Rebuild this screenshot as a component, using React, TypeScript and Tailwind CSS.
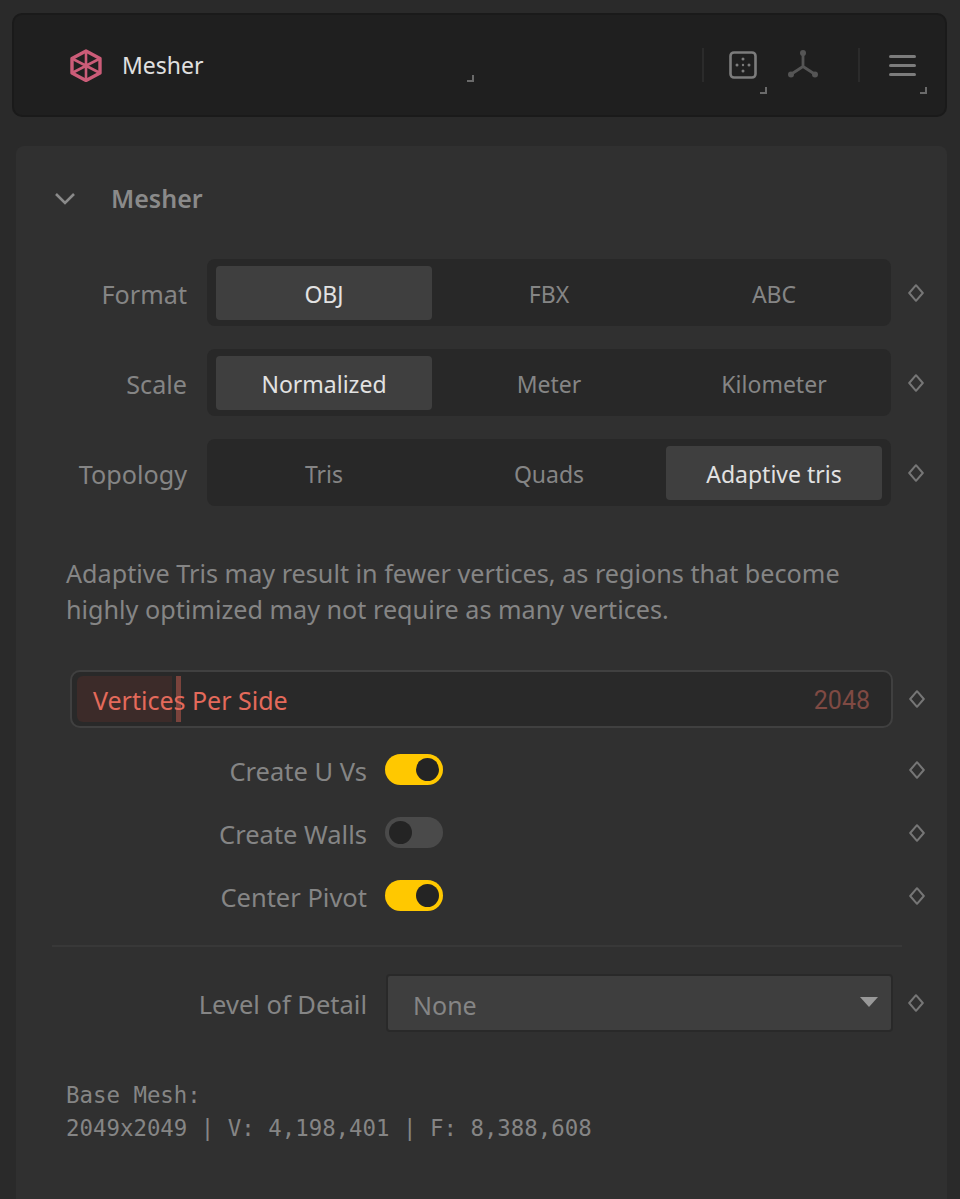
import React from "react";

const sansFont = "font-['Noto_Sans','Open_Sans',sans-serif]";

function CornerMark({ className }: { className: string }) {
  return (
    <span
      className={`absolute w-[7px] h-[7px] border-r-2 border-b-2 border-[#6a6a6a] ${className}`}
    />
  );
}

function Diamond() {
  return (
    <svg width="16" height="18" viewBox="0 0 16 18" fill="none" className="block">
      <path
        d="M8 1.2 14.8 9 8 16.8 1.2 9Z"
        stroke="#767676"
        strokeWidth="2"
        strokeLinejoin="round"
      />
    </svg>
  );
}

function MesherLogo() {
  return (
    <svg width="32" height="33" viewBox="0 0 32 33" fill="none" stroke="#cb5c78" strokeWidth="3.4" strokeLinejoin="round">
      <path d="M16 2 30 9.5V24L16 31.5 2 24V9.5Z" />
      <path d="M16 2V31.5M2 9.5 30 24M30 9.5 2 24" strokeWidth="2.6" />
    </svg>
  );
}

function DiceIcon() {
  return (
    <svg width="28" height="28" viewBox="0 0 28 28" fill="none">
      <rect x="1.5" y="1.5" width="25" height="25" rx="3.5" stroke="#7c7c7c" strokeWidth="2.6" />
      <g fill="#7c7c7c">
        <circle cx="14" cy="8" r="1.5" />
        <circle cx="8" cy="14" r="1.5" />
        <circle cx="14" cy="14" r="1.2" />
        <circle cx="20" cy="14" r="1.5" />
        <circle cx="14" cy="20" r="1.5" />
      </g>
    </svg>
  );
}

function AxisIcon() {
  return (
    <svg width="30" height="30" viewBox="0 0 30 30" fill="#555555" stroke="#555555">
      <path d="M15 3V16.5M15 16.5 3.5 24M15 16.5 26.5 24" fill="none" strokeWidth="2.8" />
      <circle cx="15" cy="3" r="3" stroke="none" />
      <circle cx="3" cy="24.5" r="3" stroke="none" />
      <circle cx="27" cy="24.5" r="3" stroke="none" />
    </svg>
  );
}

function Segmented({ label, options, active }: { label: string; options: string[]; active: string }) {
  return (
    <div className="flex items-center h-[67px]">
      <div className="w-[171px] pt-[4px] text-right text-[25.2px] leading-none text-[#858585]">{label}</div>
      <div className="ml-5 w-[684px] h-full rounded-lg bg-[#282828] px-[9px] pt-[7px] pb-[6px] grid grid-cols-3 gap-[9px]">
        {options.map((option) => (
          <div
            key={option}
            className={
              option === active
                ? "rounded bg-[#3f3f3f] text-[#e2e2e2] flex items-center justify-center text-[23px]"
                : "rounded text-[#858585] flex items-center justify-center text-[23px]"
            }
          >
            <span className="pt-[2px]">{option}</span>
          </div>
        ))}
      </div>
      <div className="ml-[17px]">
        <Diamond />
      </div>
    </div>
  );
}

function ToggleRow({ label, on }: { label: string; on: boolean }) {
  return (
    <div className="flex items-center h-[32px]">
      <div className="w-[351px] pt-[6px] text-right text-[25.5px] leading-none text-[#858585]">{label}</div>
      <div
        className={
          on
            ? "ml-[18px] w-[58px] h-[31px] rounded-full bg-[#ffc800] flex items-center justify-end px-[4px]"
            : "ml-[18px] w-[58px] h-[31px] rounded-full bg-[#4a4a4a] flex items-center justify-start px-[4px]"
        }
      >
        <span className="w-[23px] h-[23px] rounded-full bg-[#242424]" />
      </div>
      <div className="ml-[466px] pt-[2px]">
        <Diamond />
      </div>
    </div>
  );
}

export default function App() {
  return (
    <div className={`w-[960px] h-[1199px] overflow-hidden bg-[#2a2a2a] pt-[13px] pl-3 ${sansFont}`}>
      <header className="relative w-[935px] h-[104px] rounded-[10px] border-2 border-[#1a1a1a] bg-[#1f1f1f] flex items-center">
        <div className="ml-[56px]">
          <MesherLogo />
        </div>
        <span className="ml-[20px] text-[23px] leading-none text-[#e0e0e0]">Mesher</span>
        <CornerMark className="left-[453px] top-[60px]" />
        <span className="ml-auto w-[2px] h-[34px] bg-[#2b2b2b]" />
        <div className="ml-[25px]">
          <DiceIcon />
        </div>
        <CornerMark className="left-[746px] top-[72px]" />
        <div className="ml-[31px]">
          <AxisIcon />
        </div>
        <span className="ml-[40px] w-[2px] h-[34px] bg-[#2b2b2b]" />
        <div className="ml-[29px] w-[27px] flex flex-col gap-[6px]">
          <span className="h-[3px] rounded-full bg-[#7c7c7c]" />
          <span className="h-[3px] rounded-full bg-[#7c7c7c]" />
          <span className="h-[3px] rounded-full bg-[#7c7c7c]" />
        </div>
        <CornerMark className="left-[906px] top-[72px]" />
        <span className="w-[29px]" />
      </header>

      <main className="mt-[29px] ml-1 w-[931px] h-[1060px] rounded-t-lg bg-[#303030]">
        <div className="flex items-center h-[104px]">
          <svg width="22" height="14" viewBox="0 0 22 14" fill="none" className="ml-[38px] mt-[2px]">
            <path d="M2 2 11 11 20 2" stroke="#8a8a8a" strokeWidth="2.6" />
          </svg>
          <span className="ml-[35px] text-[25px] leading-none font-semibold text-[#8a8a8a]">Mesher</span>
        </div>

        <div className="mt-[9px] flex flex-col gap-[23px]">
          <Segmented label="Format" options={["OBJ", "FBX", "ABC"]} active="OBJ" />
          <Segmented label="Scale" options={["Normalized", "Meter", "Kilometer"]} active="Normalized" />
          <Segmented label="Topology" options={["Tris", "Quads", "Adaptive tris"]} active="Adaptive tris" />
        </div>

        <p className="mt-[49px] ml-[50px] text-[25.2px] leading-[36px] text-[#858585]">
          Adaptive Tris may result in fewer vertices, as regions that become
          <br />
          highly optimized may not require as many vertices.
        </p>

        <div className="mt-[43px] flex items-center">
          <div className="relative ml-[54px] w-[823px] h-[58px] rounded-[10px] border-2 border-[#404040] bg-[#292929] flex items-center justify-between pl-[21px] pr-[21px]">
            <span className="absolute left-[5px] top-[4px] w-[95px] h-[46px] rounded-l-md bg-[#3c2b29]" />
            <span className="absolute left-[104px] top-[4px] w-[5px] h-[46px] bg-[#7a433c]" />
            <span className="relative pt-[2px] text-[25px] leading-none text-[#e46a5b]">Vertices Per Side</span>
            <span className="relative pt-[2px] text-[25px] leading-none font-['Roboto',sans-serif] text-[#7f4a43]">2048</span>
          </div>
          <div className="ml-[16px]">
            <Diamond />
          </div>
        </div>

        <div className="mt-[25px] flex flex-col gap-[31px]">
          <ToggleRow label="Create U Vs" on={true} />
          <ToggleRow label="Create Walls" on={false} />
          <ToggleRow label="Center Pivot" on={true} />
        </div>

        <div className="mt-[34px] ml-9 w-[850px] h-[2px] bg-[#383838]" />

        <div className="mt-[27px] flex items-center">
          <div className="w-[351px] pt-[4px] text-right text-[25.5px] leading-none text-[#858585]">Level of Detail</div>
          <div className="ml-[19px] w-[507px] h-[58px] rounded border-2 border-[#292929] bg-[#3e3e3e] flex items-center justify-between pl-[25px] pr-[13px]">
            <span className="pt-[4px] text-[25px] leading-none text-[#858585]">None</span>
            <svg width="18" height="10" viewBox="0 0 18 10" className="mb-[2px]">
              <path d="M0 0H18L9 10Z" fill="#999999" />
            </svg>
          </div>
          <div className="ml-[15px]">
            <Diamond />
          </div>
        </div>

        <pre className="mt-[47px] ml-[50px] font-['DejaVu_Sans_Mono',monospace] text-[22.4px] leading-[33px] text-[#858585]">
          {"Base Mesh:\n2049x2049 | V: 4,198,401 | F: 8,388,608"}
        </pre>
      </main>
    </div>
  );
}
